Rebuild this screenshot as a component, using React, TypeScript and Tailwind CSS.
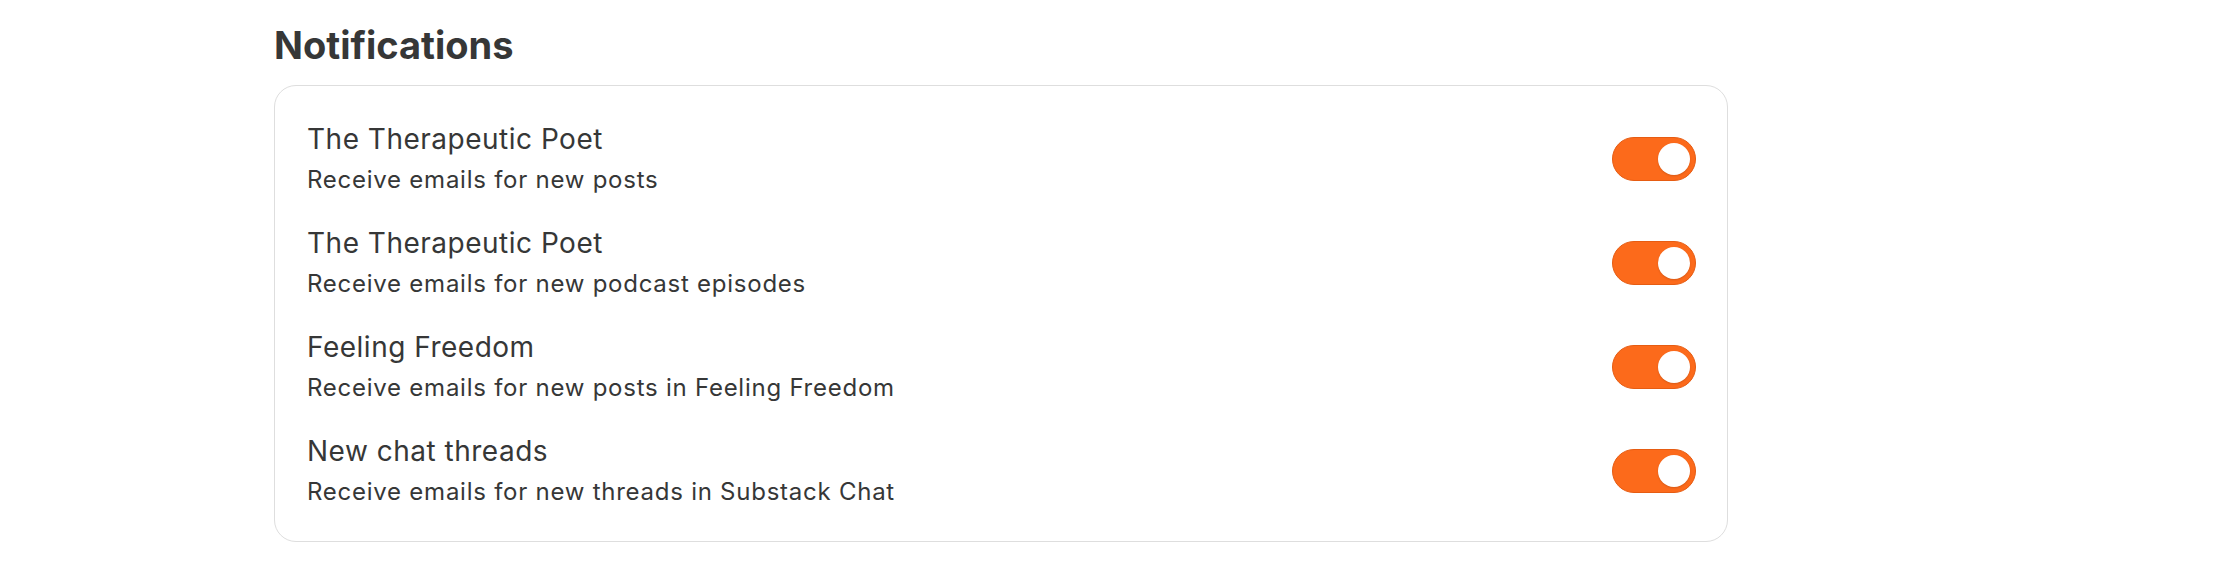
import React from "react";

const items = [
  { title: "The Therapeutic Poet", sub: "Receive emails for new posts" },
  { title: "The Therapeutic Poet", sub: "Receive emails for new podcast episodes" },
  { title: "Feeling Freedom", sub: "Receive emails for new posts in Feeling Freedom" },
  { title: "New chat threads", sub: "Receive emails for new threads in Substack Chat" },
];

function Toggle() {
  return (
    <div className="flex h-[44px] w-[84px] shrink-0 items-center justify-end rounded-full border border-[#e65c12] bg-[#fc6a1b] pr-[5px]">
      <div className="h-[32px] w-[32px] rounded-full bg-white shadow-[0_1px_2px_rgba(0,0,0,0.15)]" />
    </div>
  );
}

export default function App() {
  return (
    <div
      className="min-h-[580px] w-[2218px] bg-white text-[#363737]"
      style={{ fontFamily: 'Inter, "Noto Sans", sans-serif' }}
    >
      <div className="ml-[274px] w-[1454px] pt-[21px]">
        <h1 className="text-[38px] font-bold leading-[48px]">Notifications</h1>
        <div className="mt-[16px] flex flex-col gap-[29px] rounded-[22px] border border-[#dedede] pb-[33px] pl-[32px] pr-[31px] pt-[35px]">
          {items.map((it, i) => (
            <div key={i} className="flex items-center justify-between">
              <div className="flex flex-col">
                <div className="text-[28px] leading-[36px] tracking-[0.5px]">{it.title}</div>
                <div className="mt-[7px] text-[24px] leading-[32px] tracking-[0.75px]">{it.sub}</div>
              </div>
              <Toggle />
            </div>
          ))}
        </div>
      </div>
    </div>
  );
}
